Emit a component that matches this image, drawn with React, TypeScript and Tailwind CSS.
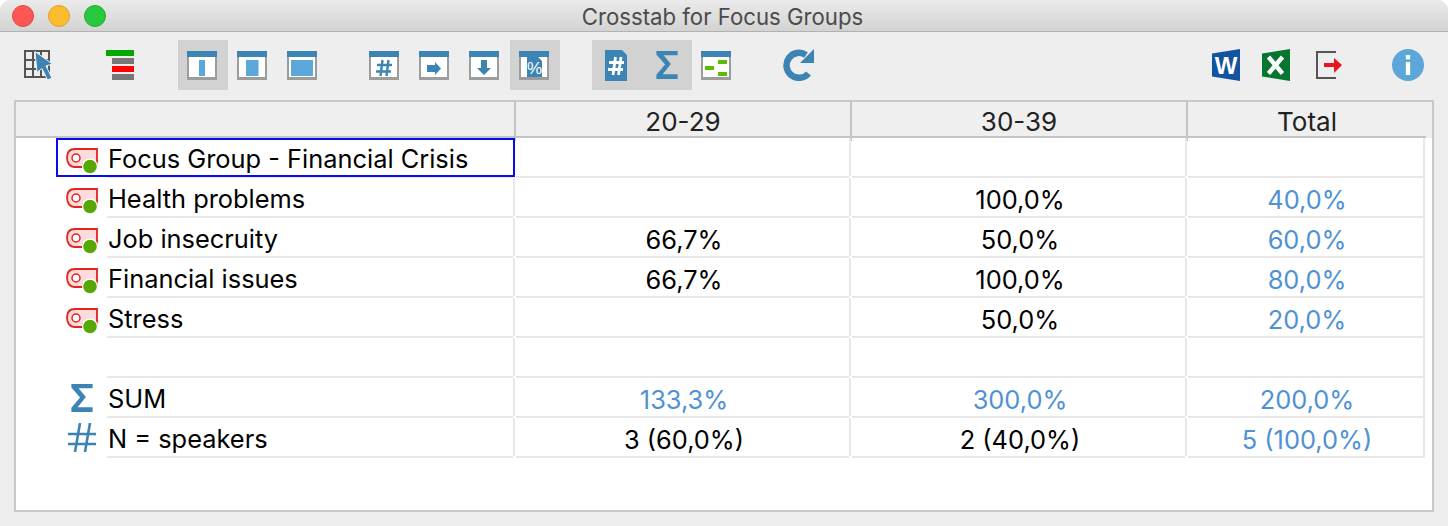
import type { ReactNode } from "react";

const BLUE = "#3b84b3";
const LIGHT = "#5ba7d9";

function Frame({ children }: { children?: ReactNode }) {
  return (
    <svg width="30" height="29" viewBox="0 0 30 29">
      <rect x="0" y="0" width="30" height="29" fill="#9c9c9c" />
      <rect x="2" y="6" width="26" height="20" fill="#fff" />
      <rect x="0" y="0" width="30" height="6" fill={BLUE} />
      {children}
    </svg>
  );
}

function Btn({ children, active, className }: { children: ReactNode; active?: boolean; className?: string }) {
  return (
    <div className={`flex h-[50px] w-[50px] shrink-0 items-center justify-center ${active ? "bg-[#d2d2d2]" : ""} ${className ?? ""}`}>
      {children}
    </div>
  );
}

function CursorIcon() {
  return (
    <svg width="32" height="32" viewBox="0 0 32 32">
      <rect x="2" y="1" width="26" height="28" fill="#555" />
      <g fill="#eee">
        <rect x="4" y="3" width="6" height="7" /><rect x="12" y="3" width="6" height="7" /><rect x="20" y="3" width="6" height="7" />
        <rect x="4" y="12" width="6" height="7" /><rect x="12" y="12" width="6" height="7" /><rect x="20" y="12" width="6" height="7" />
        <rect x="4" y="21" width="6" height="6" /><rect x="12" y="21" width="6" height="6" /><rect x="20" y="21" width="6" height="6" />
      </g>
      <path d="M13 2.5L30.5 15L24 17L30 29L25.5 31L20 19.5L15 23.5Z" fill={BLUE} stroke="#f4f4f4" strokeWidth="1" />
    </svg>
  );
}

function StackIcon() {
  return (
    <svg width="28" height="30" viewBox="0 0 28 30">
      <rect x="0" y="0" width="28" height="6" fill="#00a800" />
      <rect x="6" y="8" width="22" height="6" fill="#777" />
      <rect x="6" y="16" width="22" height="6" fill="#f00" />
      <rect x="6" y="24" width="22" height="6" fill="#777" />
    </svg>
  );
}

function DocHash() {
  return (
    <svg width="22" height="31" viewBox="0 0 22 31">
      <path d="M0 0H17L22 5V31H0Z" fill={BLUE} />
      <g stroke="#fff" strokeWidth="2.8" fill="none">
        <path d="M4 12.5H19M3 19.5H18" />
        <path d="M10.5 7L8 25M16 7L13.5 25" />
      </g>
    </svg>
  );
}

function Sigma() {
  return (
    <svg width="22" height="28" viewBox="0 0 22 29">
      <path d="M0 0H22V4.5H7.5L15 13.5L6.5 24H22V29H0V24.5L9 14L0 3.5Z" fill={BLUE} />
    </svg>
  );
}

function Refresh() {
  return (
    <svg width="32" height="32" viewBox="0 0 32 32">
      <path d="M26.5 24.5A12.5 12.5 0 1 1 24 6" fill="none" stroke={BLUE} strokeWidth="6.5" />
      <path d="M32 0V14H18Z" fill={BLUE} />
    </svg>
  );
}

function WordIcon() {
  return (
    <svg width="28" height="32" viewBox="0 0 28 32">
      <path d="M0 4.5L28 0V32L0 27.5Z" fill="#14539f" />
      <text x="14" y="25" textAnchor="middle" fill="#fff" fontFamily="'Liberation Sans', sans-serif" fontWeight="700" fontSize="24">W</text>
    </svg>
  );
}

function ExcelIcon() {
  return (
    <svg width="28" height="32" viewBox="0 0 28 32">
      <path d="M0 4.5L28 0V32L0 27.5Z" fill="#05762f" />
      <path d="M6.5 8L20.5 24.5M20.5 8L6.5 24.5" stroke="#fff" strokeWidth="4.4" />
    </svg>
  );
}

function ExportIcon() {
  return (
    <svg width="26" height="28" viewBox="0 0 26 28">
      <path d="M20 1H1V27H20" fill="none" stroke="#555" strokeWidth="2" />
      <path d="M8 12H18V7L26 14L18 22V16H8Z" fill="#e8141c" />
    </svg>
  );
}

function InfoIcon() {
  return (
    <svg width="32" height="32" viewBox="0 0 32 32">
      <circle cx="16" cy="16" r="16" fill={LIGHT} />
      <rect x="13.8" y="6" width="4.4" height="4.4" fill="#fff" />
      <rect x="13.8" y="13" width="4.4" height="13" fill="#fff" />
    </svg>
  );
}

function CodeIcon() {
  return (
    <svg width="32" height="28" viewBox="0 0 32 28">
      <path d="M1 10.5C1 5 4 2 9 2H31V14C31 18 29 20 26 20H9C4 20 1 16 1 10.5Z" fill="#fbdcdc" stroke="#e3231d" strokeWidth="1.8" />
      <circle cx="10" cy="11" r="4" fill="#fff" stroke="#e3231d" strokeWidth="1.5" />
      <circle cx="24" cy="19.5" r="8" fill="#fff" />
      <circle cx="24" cy="19.5" r="6.8" fill="#57a707" />
    </svg>
  );
}

function Hash() {
  return (
    <svg width="28" height="29" viewBox="0 0 28 29">
      <g stroke={BLUE} strokeWidth="2.6" fill="none">
        <path d="M0 11H28M0 21H28" />
        <path d="M12 0L7 29M22 0L17 29" />
      </g>
    </svg>
  );
}

function Toolbar() {
  return (
    <div className="flex h-[68px] items-start pl-[13px] pt-[8px]">
      <Btn><CursorIcon /></Btn>
      <Btn className="ml-[32px]"><StackIcon /></Btn>
      <Btn active className="ml-[33px] pr-[2px]"><Frame><rect x="12" y="9" width="6" height="16" fill={LIGHT} /></Frame></Btn>
      <Btn className="pr-[2px]"><Frame><rect x="9" y="9" width="12.5" height="16" fill={LIGHT} /></Frame></Btn>
      <Btn className="pr-[2px]"><Frame><rect x="4" y="9" width="22" height="16" fill={LIGHT} /></Frame></Btn>
      <Btn className="ml-[31px]">
        <Frame>
          <g stroke={BLUE} strokeWidth="2.4">
            <path d="M8 14H23M7 20.5H22" />
            <path d="M13.5 9L11.5 25M19.5 9L17.5 25" />
          </g>
        </Frame>
      </Btn>
      <Btn><Frame><path d="M8 14H16V11L22 17.5L16 24V21H8Z" fill={BLUE} /></Frame></Btn>
      <Btn><Frame><path d="M12 9H18V17H22L15 24L8 17H12Z" fill={BLUE} /></Frame></Btn>
      <Btn active className="ml-px pr-[2px]">
        <Frame>
          <path d="M8 6H19L23 10V26H8Z" fill={BLUE} />
          <text x="15.5" y="23" textAnchor="middle" fill="#fff" fontFamily="'Liberation Sans', sans-serif" fontSize="17">%</text>
        </Frame>
      </Btn>
      <div className="ml-[32px] flex bg-[#d2d2d2]">
        <Btn className="pr-[2px]"><DocHash /></Btn>
        <Btn><Sigma /></Btn>
      </div>
      <Btn className="pr-[2px]">
        <Frame>
          <rect x="4" y="15" width="9" height="4" fill="#5ebd00" />
          <rect x="17" y="9" width="9" height="4" fill="#5ebd00" />
          <rect x="17" y="21" width="9" height="4" fill="#5ebd00" />
        </Frame>
      </Btn>
      <Btn className="ml-[31px]"><Refresh /></Btn>
      <Btn className="ml-[378px]"><WordIcon /></Btn>
      <Btn><ExcelIcon /></Btn>
      <Btn className="ml-px pl-[4px]"><ExportIcon /></Btn>
      <Btn className="ml-[31px]"><InfoIcon /></Btn>
    </div>
  );
}

const LINE = "bg-[#e8e8e8]";

function Cell({ children, blue, last }: { children?: ReactNode; blue?: boolean; last?: boolean }) {
  return (
    <div className="flex flex-col">
      <div className={`mr-[1px] flex h-[38px] items-center justify-center border-r-2 border-[#e8e8e8] pl-[3px] pt-[6px] text-[25.4px] ${blue ? "text-[#4f92d4]" : "text-black"}`}>
        {children}
      </div>
      <div className={`h-[2px] ${last ? "mr-[1px]" : "mr-[3px]"} ${LINE}`} />
    </div>
  );
}

type RowData = { icon?: ReactNode; iconPad?: string; label?: string; a?: string; b?: string; t?: string; blue?: boolean; selected?: boolean };

function Row({ icon, iconPad, label, a, b, t, blue, selected }: RowData) {
  return (
    <div className="grid h-[40px] grid-cols-[500px_336px_336px_238px]">
      <div className="relative flex">
        <div className={`flex h-[38px] w-[91px] shrink-0 justify-end ${iconPad ?? "pr-[9px] pt-[9px]"}`}>{icon}</div>
        <div className="flex flex-1 flex-col">
          <div className="mr-[1px] flex h-[38px] items-center border-r-2 border-[#e8e8e8] pl-[1px] pt-[4px] text-[25.4px] text-black">{label}</div>
          <div className={`mr-[3px] h-[2px] ${LINE}`} />
        </div>
        {selected && <div className="absolute bottom-[1px] left-[40px] right-[1px] top-0 border-2 border-[#0a0af0]" />}
      </div>
      <Cell blue={blue}>{a}</Cell>
      <Cell blue={blue}>{b}</Cell>
      <Cell blue last>{t}</Cell>
    </div>
  );
}

const rows: RowData[] = [
  { icon: <CodeIcon />, label: "Focus Group - Financial Crisis", selected: true },
  { icon: <CodeIcon />, label: "Health problems", b: "100,0%", t: "40,0%" },
  { icon: <CodeIcon />, label: "Job insecruity", a: "66,7%", b: "50,0%", t: "60,0%" },
  { icon: <CodeIcon />, label: "Financial issues", a: "66,7%", b: "100,0%", t: "80,0%" },
  { icon: <CodeIcon />, label: "Stress", b: "50,0%", t: "20,0%" },
  {},
  { icon: <Sigma />, iconPad: "pr-[14px] pt-[6px]", label: "SUM", a: "133,3%", b: "300,0%", t: "200,0%", blue: true },
  { icon: <Hash />, iconPad: "pr-[11px] pt-[5px]", label: "N = speakers", a: "3 (60,0%)", b: "2 (40,0%)", t: "5 (100,0%)" },
];

export default function App() {
  return (
    <div className="h-[526px] w-[1448px] overflow-hidden rounded-t-[10px] bg-[#eeeeee] font-['Inter','Liberation_Sans',sans-serif]">
      <div className="relative flex h-[32px] items-center justify-center border-b border-[#b2b2b2] bg-gradient-to-b from-[#ebebeb] to-[#d3d3d3] pr-[3px] pt-[3px] text-[22.2px] text-[#4b4b4b]">
        <div className="absolute left-[12px] top-[5px] flex gap-[14px]">
          <span className="h-[22px] w-[22px] rounded-full border border-[#e2463f] bg-[#fc5753]" />
          <span className="h-[22px] w-[22px] rounded-full border border-[#dfa023] bg-[#fdbc2e]" />
          <span className="h-[22px] w-[22px] rounded-full border border-[#1aab29] bg-[#28c83f]" />
        </div>
        Crosstab for Focus Groups
      </div>
      <Toolbar />
      <div className="ml-[14px] h-[412px] w-[1420px] border-2 border-[#c8c8c8] bg-white">
        <div className="flex h-[36px] bg-[#efefef] text-[26px] text-[#222]">
          <div className="grid w-[1410px] grid-cols-[500px_336px_336px_238px] border-b-2 border-[#c4c4c4]">
            <div className="border-r-2 border-[#c4c4c4]" />
            <div className="flex items-center justify-center border-r-2 border-[#c4c4c4]">20-29</div>
            <div className="flex items-center justify-center border-r-2 border-[#c4c4c4]">30-39</div>
            <div className="flex items-center justify-center">Total</div>
          </div>
        </div>
        {rows.map((r, i) => (
          <Row key={i} {...r} />
        ))}
      </div>
    </div>
  );
}
